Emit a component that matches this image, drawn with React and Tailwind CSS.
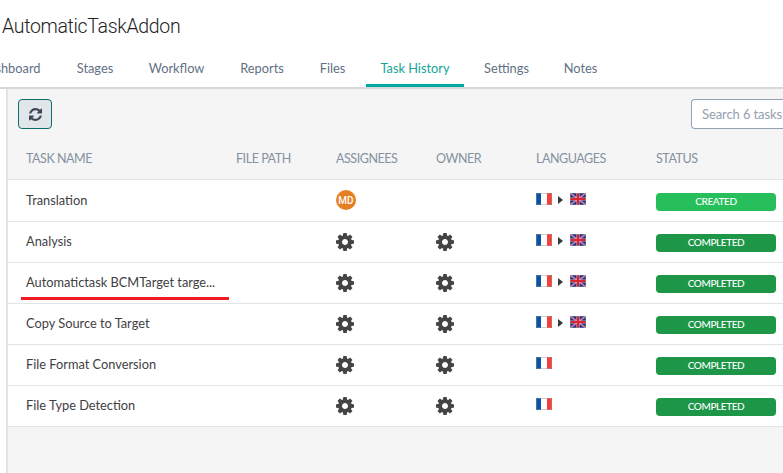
import React from "react";

const tabs = [
  { label: "Dashboard", box: "w-[94px]" },
  { label: "Stages", box: "w-[66px] ml-[5px]" },
  { label: "Workflow", box: "w-[85px] ml-[6px]" },
  { label: "Reports", box: "w-[74px] ml-[6px]" },
  { label: "Files", box: "w-[55px] ml-[6px]" },
  { label: "Task History", box: "w-[98px] ml-[6px]", active: true },
  { label: "Settings", box: "w-[75px] ml-[5px]" },
  { label: "Notes", box: "w-[63px] ml-[5px]" },
];

const headers = ["TASK NAME", "FILE PATH", "ASSIGNEES", "OWNER", "LANGUAGES", "STATUS"];

const rows = [
  { name: "Translation", user: "MD", target: true, status: "CREATED" },
  { name: "Analysis", target: true, status: "COMPLETED" },
  { name: "Automatictask BCMTarget targe...", target: true, status: "COMPLETED", marked: true },
  { name: "Copy Source to Target", target: true, status: "COMPLETED" },
  { name: "File Format Conversion", status: "COMPLETED" },
  { name: "File Type Detection", status: "COMPLETED" },
];

function Gear() {
  return (
    <svg viewBox="128 128 1536 1536" className="mt-[11px] h-[18px] w-[18px]" fill="#444446">
      <path d="M1152 896q0-106-75-181t-181-75-181 75-75 181 75 181 181 75 181-75 75-181zm512-109v222q0 12-8 23t-20 13l-185 28q-19 54-39 91 35 50 107 138 10 12 10 25t-9 23q-27 37-99 108t-94 71q-12 0-26-9l-138-108q-44 23-91 38-16 136-29 186-7 28-36 28h-222q-14 0-24.5-8.5t-11.5-21.5l-28-184q-49-16-90-37l-141 107q-10 9-25 9-14 0-25-11-126-114-165-168-7-10-7-23 0-12 8-23 15-21 51-66.5t54-70.5q-27-50-41-99l-183-27q-13-2-21-12.5t-8-23.5v-222q0-12 8-23t19-13l186-28q14-46 39-92-40-57-107-138-10-12-10-24 0-10 9-23 26-36 98.5-107.5t94.5-71.5q13 0 26 10l138 107q44-23 91-38 16-136 29-186 7-28 36-28h222q14 0 24.5 8.5t11.5 21.5l28 184q49 16 90 37l142-107q9-9 24-9 13 0 25 10 129 119 165 170 7 8 7 22 0 12-8 23-15 21-51 66.5t-54 70.5q26 50 41 98l183 28q13 2 21 12.5t8 23.5z" />
    </svg>
  );
}

function Refresh() {
  return (
    <svg viewBox="128 128 1536 1536" className="size-[13px]" fill="#3d4757">
      <path d="M1639 1056q0 5-1 7-64 268-268 434.5t-478 166.5q-146 0-282.5-55t-243.5-157l-129 129q-19 19-45 19t-45-19-19-45v-448q0-26 19-45t45-19h448q26 0 45 19t19 45-19 45l-137 137q71 66 161 102t187 36q134 0 250-65t186-179q11-17 53-117 8-23 30-23h192q13 0 22.5 9.5t9.5 22.5zm25-800v448q0 26-19 45t-45 19h-448q-26 0-45-19t-19-45 19-45l138-138q-148-137-349-137-134 0-250 65t-186 179q-11 17-53 117-8 23-30 23h-199q-13 0-22.5-9.5t-9.5-22.5v-7q65-268 270-434.5t480-166.5q146 0 284 55.5t245 156.5l130-129q19-19 45-19t45 19 19 45z" />
    </svg>
  );
}

function FrenchFlag() {
  return (
    <svg viewBox="0 0 16 12" className="h-[12px] w-[16px]">
      <path fill="#fff" d="M0 0h16v12H0z" />
      <path fill="#0952a5" d="M0 0h5v12H0z" />
      <path fill="#f4403a" d="M11 0h5v12h-5z" />
      <path d="M.5.5h15v11H.5z" fill="none" stroke="#999" strokeOpacity=".45" />
    </svg>
  );
}

function BritishFlag() {
  return (
    <svg viewBox="0 0 16 12" className="ml-[8px] h-[12px] w-[16px]">
      <path fill="#0b3195" d="M0 0h16v12H0z" />
      <path stroke="#d9a9bf" strokeWidth="1.7" d="M0 0l16 12M16 0L0 12" />
      <path stroke="#d9343f" strokeWidth=".7" d="M0 0l16 12M16 0L0 12" />
      <path stroke="#dba3b4" strokeWidth="3.2" d="M8 0v12M0 6h16" />
      <path stroke="#dc2430" strokeWidth="2" d="M8 0v12M0 6h16" />
      <path d="M.5.5h15v11H.5z" fill="none" stroke="#999" strokeOpacity=".45" />
    </svg>
  );
}

function Row({ row, first }) {
  const created = row.status === "CREATED";
  return (
    <div
      className={`relative grid grid-cols-[210px_100px_100px_100px_120px_120px] items-start border-b border-[#e1e5e9] bg-white pl-[18px] ${
        first ? "h-[42px] pt-px" : "h-[41px]"
      }`}
    >
      <div className="mt-[9px] text-[12.8px] leading-5 whitespace-nowrap text-[#3f4043]">{row.name}</div>
      <div />
      {row.user ? (
        <div className="mt-[9px] flex size-5 items-center justify-center rounded-full bg-[#e67e22] font-['Roboto',sans-serif] text-[10px] font-medium text-white">
          {row.user}
        </div>
      ) : (
        <Gear />
      )}
      {row.user ? <div /> : <Gear />}
      <div className="mt-[12px] flex">
        <FrenchFlag />
        {row.target && (
          <>
            <svg viewBox="0 0 5 8" className="mt-[3px] ml-[6px] h-[8px] w-[5px]">
              <path fill="#333a40" d="M0 0l5 4-5 4z" />
            </svg>
            <div className="-ml-px">
              <BritishFlag />
            </div>
          </>
        )}
      </div>
      <div
        className={`mt-[12px] h-[18px] rounded-[4px] text-center text-[10px] leading-[17px] font-medium tracking-[-0.4px] text-white ${
          created ? "bg-[#27bf5b]" : "bg-[#1e9648]"
        }`}
      >
        {row.status}
      </div>
      {row.marked && <div className="absolute top-[34px] left-[13px] h-[3px] w-[208px] bg-[#ed1c24]" />}
    </div>
  );
}

export default function App() {
  return (
    <div className="flex h-[473px] w-[783px] flex-col overflow-hidden bg-white font-['Lato',sans-serif] text-[13px]">
      <h1 className="h-[54px] pt-[12px] pl-[2px] font-['Roboto',sans-serif] text-[19.5px] leading-[30px] font-light tracking-[-0.33px] text-[#222]">
        AutomaticTaskAddon
      </h1>
      <nav className="-ml-[37px] flex h-[33px] shrink-0">
        {tabs.map((t) => (
          <div
            key={t.label}
            className={`flex shrink-0 justify-center pt-[4px] text-[12.8px] leading-5 whitespace-nowrap ${t.box} ${
              t.active ? "border-b-[3px] border-[#00a99d] text-[#16a398]" : "text-[#627084]"
            }`}
          >
            {t.label}
          </div>
        ))}
      </nav>
      <main className="flex grow flex-col border-t-2 border-[#d7d7de]">
        <div className="ml-[6px] grow border-l-2 border-[#e1e5e9] bg-[#f5f5f5]">
          <div className="flex h-[50px] justify-between pt-[10px] pl-[10px]">
            <button className="flex h-[30px] w-[34px] items-center justify-center rounded-[4px] border border-[#0b6e69] bg-[#e1e6ea]">
              <Refresh />
            </button>
            <div className="h-[30px] w-[92px] rounded-l-[4px] border border-r-0 border-[#93a3b3] bg-white pl-[10px] leading-[29px] tracking-[-0.1px] whitespace-nowrap text-[#94a0af]">
              Search 6 tasks
            </div>
          </div>
          <div className="grid h-[41px] grid-cols-[210px_100px_100px_100px_120px_120px] border-b border-[#e1e5e9] pl-[18px] text-[12.5px] leading-[39px] tracking-[-0.45px] text-[#8591a1]">
            {headers.map((h) => (
              <div key={h}>{h}</div>
            ))}
          </div>
          {rows.map((r, i) => (
            <Row key={r.name} row={r} first={i === 0} />
          ))}
        </div>
      </main>
    </div>
  );
}
